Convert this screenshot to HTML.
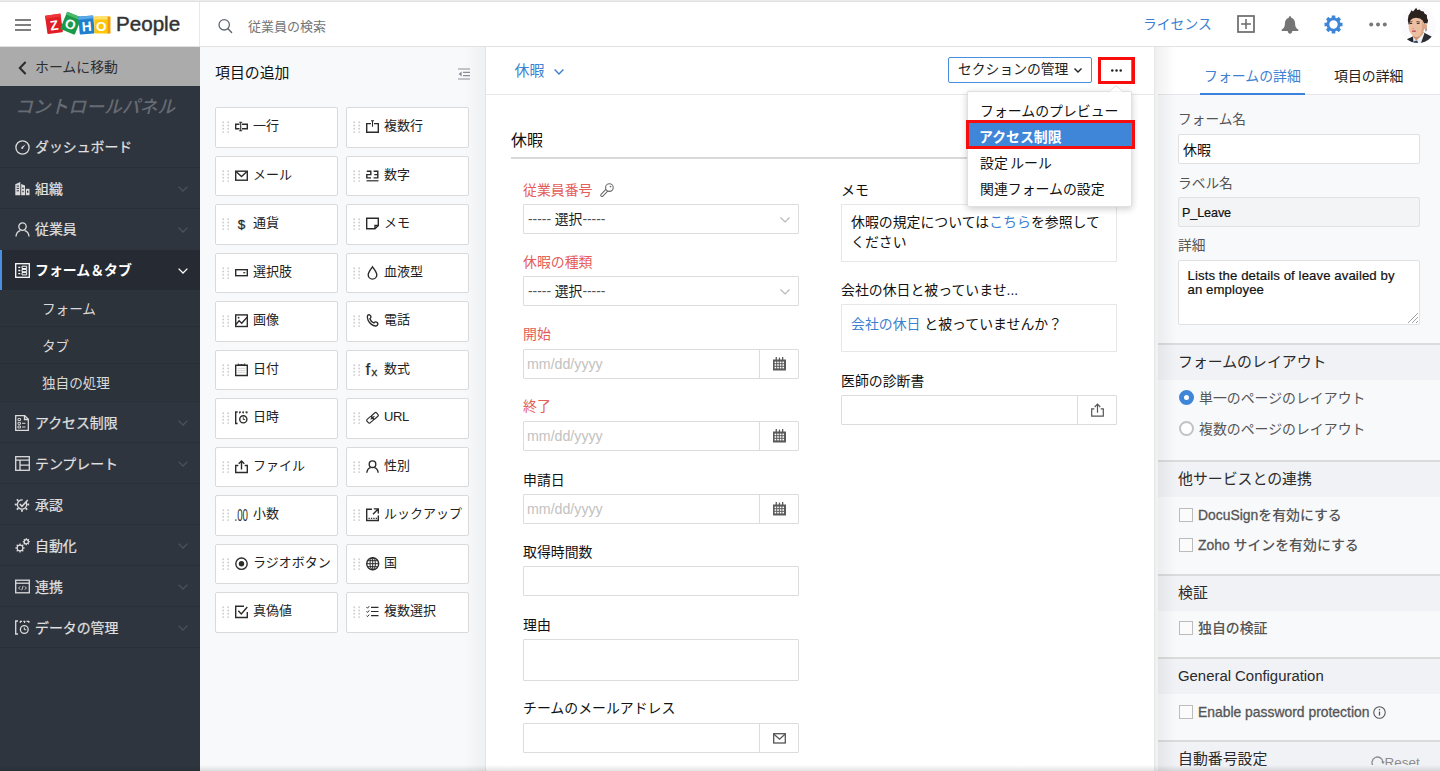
<!DOCTYPE html>
<html lang="ja">
<head>
<meta charset="utf-8">
<title>Zoho People</title>
<style>
*{box-sizing:border-box;margin:0;padding:0}
html,body{width:1440px;height:771px;overflow:hidden;background:#fff}
body{font-family:"Liberation Sans","Noto Sans CJK JP",sans-serif;font-size:13px;color:#222;position:relative}
svg{display:block;overflow:visible}
.a{position:absolute}
#topline{position:absolute;left:0;top:0;width:1440px;height:2px;background:linear-gradient(#f1f1f1,#dcdcdc)}
#hdr{position:absolute;left:0;top:2px;width:1440px;height:45px;background:#fff;border-bottom:1px solid #e2e2e2}
#hdr .vsep{position:absolute;left:199px;top:0;width:1px;height:44px;background:#e8e8e8}
#people{position:absolute;left:116px;top:8px;font-size:20.6px;color:#333;line-height:28px;-webkit-text-stroke:0.45px #333}
#search{position:absolute;left:248px;top:15px;font-size:13px;color:#757575;line-height:20px}
#lic{position:absolute;left:1143px;top:12px;font-size:13.8px;color:#3d7fd0;line-height:22px}
/* sidebar */
#side{position:absolute;left:0;top:47px;width:200px;height:724px;background:#2f353e}
#back{position:absolute;left:0;top:0;width:200px;height:39px;background:#ababab;color:#2e2e2e;font-size:13.9px;line-height:39px}
#cp{position:absolute;left:15px;top:47px;font-size:17.8px;font-style:italic;font-weight:500;color:#666b73;line-height:26px;white-space:nowrap}
.mi{position:absolute;left:0;width:200px;border-bottom:1px solid #2a2f37;color:#e0e0e0;font-size:13.9px;font-weight:400;-webkit-text-stroke:0.22px #e0e0e0;white-space:nowrap}
.mi.act{background:#262b33;border-left:2px solid #4a90e2;font-weight:700;color:#fff;border-bottom:0;-webkit-text-stroke:0}
.mi .ic{position:absolute;left:15px}
.mi.act .ic{left:13px}
.mi .tx{position:absolute;left:35px;line-height:20px}
.mi.act .tx{left:33px}
.mi svg.ch{position:absolute;left:178px}
.mi.act svg.ch{left:176px}
.sub{position:absolute;left:0;width:200px;background:#2d333b;border-bottom:1px solid #2a2f37;color:#d9d9d9;font-size:13.6px}
.sub .tx{position:absolute;left:42px;line-height:20px}
/* palette */
#pal{position:absolute;left:200px;top:47px;width:285px;height:724px;background:linear-gradient(90deg,#f8f9fb 0,#f8f9fb 264px,#eff0f2 285px)}
#pal h3{position:absolute;left:15px;top:15px;font-size:14.9px;font-weight:400;color:#111;line-height:22px}
.fc{position:absolute;width:123px;height:40px;background:#fff;border:1px solid #dadada;border-radius:2px;font-size:13px;color:#222;white-space:nowrap}
.fc .t{position:absolute;left:37px;top:0;line-height:36px}
.fc svg.g{position:absolute;left:6px;top:13px}
.fc svg.i{position:absolute;left:19px;top:12px}
/* center */
#ctr{position:absolute;left:485px;top:47px;width:669px;height:724px;background:#fff;border-left:1px solid #e4e4e4}
#ctrbar{position:absolute;left:0;top:0;width:668px;height:48px;border-bottom:1px solid #e6e6e6}
#fname{position:absolute;left:28.5px;top:12.5px;font-size:14.9px;color:#3d7fd0;line-height:22px}
#secbtn{position:absolute;left:462px;top:10px;width:144px;height:26px;border:1px solid #4a8fdf;border-radius:2px;font-size:13.8px;line-height:24px;color:#222;padding-left:9px;white-space:nowrap;background:#fff}
#dots{position:absolute;left:612px;top:10px;width:37px;height:27px;border:3px solid #f80d0d;background:#fff}
#dots .bl{position:absolute;right:0;top:0;bottom:0;width:1px;background:#4a8fdf}
#sech{position:absolute;left:25px;top:82px;font-size:16px;color:#111;line-height:24px}
#secl{position:absolute;left:25px;top:110px;width:620px;height:2px;background:#d8d8d8}
.lb{position:absolute;font-size:13.9px;line-height:20px;color:#111;white-space:nowrap}
.lb.r{color:#e45d58}
.ds{color:#555}
.inp{position:absolute;width:276px;height:30px;background:#fff;border:1px solid #dcdcdc;border-radius:1px;font-size:13px;line-height:28px;color:#222}
.inp .ph{position:absolute;left:3px;top:0;color:#c2c2c2;font-size:14.2px;line-height:28px}
.inp .sel{position:absolute;left:4px;top:1px;color:#222;font-size:13.8px;line-height:27px;white-space:nowrap}
.inp .ad{position:absolute;right:0;top:0;width:39px;height:28px;border-left:1px solid #dcdcdc}
.box{position:absolute;width:276px;background:#fff;border:1px solid #e7e7e7;font-size:13.9px;line-height:20px;color:#111;padding:7px 9px}
.lnk{color:#3d7fd0}
/* dropdown */
#dd{position:absolute;left:967px;top:91px;width:165px;height:116px;background:#fff;border:1px solid #e0e0e0;border-radius:2px;box-shadow:0 2px 7px rgba(0,0,0,.2)}
#dd .it{position:absolute;left:0;width:163px;height:26px;font-size:13.9px;line-height:26px;padding-left:12px;color:#111;white-space:nowrap}
#dd .hl{background:#3f86d8;color:#fff;font-weight:700;border:3px solid #f80d0d;line-height:29px;padding-left:10px;left:-2px;width:169px;height:29px}
/* right */
#rshadow{position:absolute;left:1154px;top:47px;width:4px;height:724px;background:linear-gradient(90deg,#e6e6e6 0,#e6e6e6 1px,#efefef 1px,#f2f2f2 4px)}
#rgt{position:absolute;left:1158px;top:47px;width:282px;height:724px;background:#f8f9fb}
#rgt .inshadow{position:absolute;left:0;top:0;width:18px;height:724px;background:linear-gradient(90deg,rgba(0,0,0,.05),rgba(0,0,0,0))}
#tabs{position:absolute;left:0;top:0;width:282px;height:48px;background:#fff;border-bottom:1px solid #e4e6e9}
.tab{position:absolute;top:18px;font-size:13.9px;line-height:22px;white-space:nowrap;color:#222}
.rl{position:absolute;left:20px;font-size:13.7px;line-height:20px;color:#555;white-space:nowrap}
.ri{position:absolute;left:20px;width:242px;background:#fff;border:1px solid #e1e1e1;border-radius:2px;font-size:13px;color:#111;padding-left:4px;white-space:nowrap}
.sh{position:absolute;left:0;width:282px;height:37px;background:#f1f2f6;border-top:2px solid #dbdbdc;font-size:14.9px;line-height:34px;color:#2a2a2a;padding-left:20px;white-space:nowrap}
.opt{position:absolute;left:40px;font-size:13.9px;line-height:20px;color:#555;white-space:nowrap}
.cb{position:absolute;left:21px;width:14px;height:14px;border:1.5px solid #bcbcbc;background:#fbfbfb}
.rd{position:absolute;left:21px;width:15px;height:15px;border:2px solid #c2c2c2;border-radius:50%;background:#fff}
.rd.on{border:5.5px solid #3f86d8}
.lt{-webkit-text-stroke:0.3px #555}
#botfade{position:absolute;left:0;top:765px;width:1440px;height:6px;background:linear-gradient(rgba(0,0,0,0),rgba(0,0,0,.11))}
</style>
</head>
<body>
<div id="topline"></div>
<div id="hdr">
<div class="vsep"></div>
<svg class="a" style="left:15px;top:17px" width="16" height="12" viewBox="0 0 16 12"><path d="M0 1h16M0 6h16M0 11h16" stroke="#555" stroke-width="1.5" fill="none"/></svg>
<div id="people">People</div>
<svg class="a" style="left:218px;top:16px" width="15" height="16" viewBox="0 0 15 16"><circle cx="6.2" cy="6.8" r="5.2" stroke="#5f6770" stroke-width="1.3" fill="none"/><path d="M10 10.8l3.6 3.8" stroke="#5f6770" stroke-width="1.4" stroke-linecap="round"/></svg>
<div id="search">従業員の検索</div>
<div id="lic">ライセンス</div>
<svg class="a" style="left:1237px;top:13px" width="18" height="18" viewBox="0 0 18 18"><rect x="1" y="1" width="16" height="16" fill="none" stroke="#6a6a6a" stroke-width="1.7"/><path d="M9 4.1v9.8M4.1 9h9.8" stroke="#6a6a6a" stroke-width="1.5"/></svg>
<svg class="a" style="left:1281px;top:13.5px" width="18" height="18" viewBox="0 0 18 18"><path d="M9 0.3c.700 0 1.2.500 1.2 1.1v.400c2.4.700 3.9 2.8 3.9 5.6 0 2.8.700 4.3 2.1 5.4.800.6 1.3.800 1.3 1.4 0 .500-.400.8-1 .800H1.5c-.600 0-1-.300-1-.800 0-.600.5-.800 1.3-1.4C3.2 11.7 3.9 10.2 3.9 7.4c0-2.8 1.5-4.9 3.9-5.6v-.400C7.8.800 8.3.300 9 .300z" fill="#757575"/><path d="M6.7 14.8h4.6c0 1.7-.900 2.9-2.3 2.9s-2.3-1.2-2.3-2.9z" fill="#757575"/></svg>
<svg class="a" style="left:1324px;top:13px" width="19" height="19" viewBox="0 0 19 19"><rect x="7.7" y="0.5" width="3.6" height="3.6" rx="0.3" transform="rotate(0 9.5 9.5)" fill="#3d85d8"/><rect x="7.7" y="0.5" width="3.6" height="3.6" rx="0.3" transform="rotate(45 9.5 9.5)" fill="#3d85d8"/><rect x="7.7" y="0.5" width="3.6" height="3.6" rx="0.3" transform="rotate(90 9.5 9.5)" fill="#3d85d8"/><rect x="7.7" y="0.5" width="3.6" height="3.6" rx="0.3" transform="rotate(135 9.5 9.5)" fill="#3d85d8"/><rect x="7.7" y="0.5" width="3.6" height="3.6" rx="0.3" transform="rotate(180 9.5 9.5)" fill="#3d85d8"/><rect x="7.7" y="0.5" width="3.6" height="3.6" rx="0.3" transform="rotate(225 9.5 9.5)" fill="#3d85d8"/><rect x="7.7" y="0.5" width="3.6" height="3.6" rx="0.3" transform="rotate(270 9.5 9.5)" fill="#3d85d8"/><rect x="7.7" y="0.5" width="3.6" height="3.6" rx="0.3" transform="rotate(315 9.5 9.5)" fill="#3d85d8"/><circle cx="9.5" cy="9.5" r="5.6" fill="none" stroke="#3d85d8" stroke-width="2.8"/></svg>
<svg class="a" style="left:1369px;top:20px" width="18" height="5" viewBox="0 0 18 5"><circle cx="2.2" cy="2.5" r="2" fill="#777"/><circle cx="9" cy="2.5" r="2" fill="#777"/><circle cx="15.8" cy="2.5" r="2" fill="#777"/></svg>
<svg class="a" style="left:1400px;top:5px" width="36" height="36" viewBox="0 0 36 36"><defs><clipPath id="avc"><circle cx="18" cy="18" r="18"/></clipPath></defs>
<g clip-path="url(#avc)"><rect width="36" height="36" fill="#fbfafd"/>
<path d="M23.4 25.3L31.9 29.7 27.5 36H20.3z" fill="#2a2d35"/><path d="M6.3 32.4L13.3 29.3 14.2 36H9z" fill="#23262d"/>
<path d="M13 29.3L16.2 33.6 23.2 25.6 24.4 26.4 21 36H13.6z" fill="#edf1f4"/><path d="M14.3 33.9L17.3 33.5 18.1 36H13.9z" fill="#2b4166"/>
<path d="M12.8 26.5L22.6 23.5 23 27 16.2 33.7 12.9 29.4z" fill="#cf926f"/>
<ellipse cx="16.4" cy="19.7" rx="7.9" ry="10.3" fill="#ecbfa2" transform="rotate(-5 16.4 19.7)"/>
<path d="M22.5 13.5c1.5 2.5 2 6 1.3 9.5-.700 3.3-2.7 6-5.3 7 2-2.3 3-5 3.3-8 .300-3 .100-5.8.700-8.5z" fill="#c98f6d" opacity=".55"/>
<path d="M8.6 17.5L7.8 13 8.5 8.6 10.4 5.6 11.4 3.2 13 4.4 16.2 0.7 17.3 3 19.6 2.4 21 4.1 23.6 4.5 24.5 6.6 26.9 8 27 11.1 28.1 13.6 27.3 16.6 25.2 16.2 24.3 16.8 22.6 13.5 20 11.5 16 10.8 12.5 11.6 10.3 13.6 9.3 17.4z" fill="#2b221e"/>
<ellipse cx="25.3" cy="19.4" rx="1.7" ry="2.9" fill="#dda584"/><path d="M26.2 21.8l.5-.3-.7 3.2-.6-1.8z" fill="#2b221e"/>
<path d="M9.3 15.2l3-.6M16.4 14.7l3.4.300" stroke="#3a2a22" stroke-width="0.8"/><path d="M9.8 16.5h2.4M16.8 16.4h2.7" stroke="#3d2c26" stroke-width="1"/>
<path d="M12.3 21.3l1.5.300" stroke="#c08a68" stroke-width="0.8"/><ellipse cx="14" cy="24.2" rx="2.2" ry="0.9" fill="#c85a6a"/>
</g></svg>
</div>
<svg class="a" style="left:44px;top:8px" width="70" height="30" viewBox="0 0 70 30">
<g transform="rotate(-8 10 16)"><rect x="2.2" y="6.6" width="15.6" height="18.6" rx="1" fill="#e01e26"/><rect x="2.2" y="6.6" width="15.6" height="3" fill="#f0353a"/><text x="10" y="22" font-family="Liberation Sans, sans-serif" font-weight="700" font-size="13.5" fill="#fff" text-anchor="middle">Z</text></g>
<g transform="rotate(22 27 15)"><rect x="19.2" y="6" width="15.6" height="18.6" rx="1" fill="#199a49"/><rect x="19.2" y="6" width="15.6" height="3" fill="#4cba6c"/><text x="27" y="21.2" font-family="Liberation Sans, sans-serif" font-weight="700" font-size="13.5" fill="#fff" text-anchor="middle">O</text></g>
<g transform="rotate(-5 42.5 17)"><rect x="35" y="8" width="15" height="18" rx="1" fill="#1f7fcf"/><rect x="35" y="8" width="15" height="3" fill="#5aa9e6"/><text x="42.5" y="23" font-family="Liberation Sans, sans-serif" font-weight="700" font-size="13.5" fill="#fff" text-anchor="middle">H</text></g>
<g><rect x="50.3" y="8.6" width="16" height="17" rx="1" fill="#fdc60a"/><rect x="50.3" y="8.6" width="16" height="3" fill="#fee066"/><rect x="63.6" y="8.6" width="2.7" height="17" fill="#f29a12"/><text x="57.3" y="23.2" font-family="Liberation Sans, sans-serif" font-weight="700" font-size="13.5" fill="#fff" text-anchor="middle">O</text></g>
</svg>
<div id="side">
<div id="back"><svg class="a" style="left:18px;top:14px" width="9" height="14" viewBox="0 0 9 14"><path d="M7.6 1L1.8 7l5.8 6" stroke="#2a2a2a" stroke-width="2" fill="none"/></svg><span class="a" style="left:35px;top:1px">ホームに移動</span></div>
<div id="cp">コントロールパネル</div>
<div class="mi" style="top:79px;height:42px"><span class="ic" style="top:13.5px"><svg width="15" height="15" viewBox="0 0 15 15"><circle cx="7.5" cy="7.5" r="6.6" stroke="#dcdcdc" fill="none" stroke-width="1.3"/><path d="M10.6 4.3L7.9 8.3 6.7 7.1z" fill="#dcdcdc"/><circle cx="7.2" cy="8" r="1" fill="#dcdcdc"/></svg></span><span class="tx" style="top:11px">ダッシュボード</span></div>
<div class="mi" style="top:121px;height:41px"><span class="ic" style="top:13.2px"><svg width="15" height="15" viewBox="0 0 15 15"><path d="M0.3 14.2V3.2L5.3 1v13.2z" fill="#dcdcdc"/><path d="M6.2 3l3.8 1.6v9.6H6.2z" fill="#dcdcdc"/><path d="M10.8 7.8h3.7v6.4h-3.7z" fill="#dcdcdc"/><path d="M1.6 5h2.4M1.6 7.4h2.4M1.6 9.8h2.4" stroke="#2f353e" stroke-width="1"/><path d="M7.4 6.5h1.3v1.5H7.4zM7.4 9.8h1.3v1.5H7.4zM12 9.8h1.3v2H12z" fill="#2f353e"/></svg></span><span class="tx" style="top:10.7px">組織</span><svg style="top:18.2px" class="ch" width="10" height="6" viewBox="0 0 10 6"><path d="M0.6 0.6L5 5l4.4-4.4" stroke="#4b525b" stroke-width="1.3" fill="none"/></svg></div>
<div class="mi" style="top:162px;height:41px;border-bottom:0"><span class="ic" style="top:12.9px"><svg width="15" height="15" viewBox="0 0 15 15"><circle cx="7.5" cy="4.6" r="3.7" stroke="#dcdcdc" fill="none" stroke-width="1.3"/><path d="M1 14.5c.3-3.6 2.8-5.5 4.3-5.9M14 14.5c-.3-3.6-2.8-5.5-4.3-5.9" stroke="#dcdcdc" fill="none" stroke-width="1.3"/></svg></span><span class="tx" style="top:10.4px">従業員</span><svg style="top:17.9px" class="ch" width="10" height="6" viewBox="0 0 10 6"><path d="M0.6 0.6L5 5l4.4-4.4" stroke="#4b525b" stroke-width="1.3" fill="none"/></svg></div>
<div class="mi act" style="top:203px;height:40px"><span class="ic" style="top:12.5px"><svg width="15" height="15" viewBox="0 0 15 15"><rect x="0.7" y="0.7" width="13.6" height="13.6" stroke="#fff" fill="none" stroke-width="1.3"/><path d="M3.3 4.3h2M3.3 7.5h2M3.3 10.7h2" stroke="#fff" stroke-width="1.3"/><path d="M7 3.2h4.7v2.3H7zM7 6.4h4.7v2.3H7zM7 9.6h4.7v2.3H7z" stroke="#fff" stroke-width="1" fill="none"/></svg></span><span class="tx" style="top:10px">フォーム＆タブ</span><svg style="top:17.5px" class="ch" width="10" height="6" viewBox="0 0 10 6"><path d="M0.6 0.6L5 5l4.4-4.4" stroke="#fff" stroke-width="1.3" fill="none"/></svg></div>
<div class="mi" style="top:355px;height:41px"><span class="ic" style="top:13px"><svg width="15" height="16" viewBox="0 0 15 16"><path d="M0.7 0.7h9l3.6 3.6v11h-12.6z" stroke="#dcdcdc" fill="none" stroke-width="1.3"/><path d="M9.5 0.7v3.8h3.8" stroke="#dcdcdc" fill="none" stroke-width="1.3"/><path d="M3 3.5h2.5v2H3zM3 7.3h2.5v2H3zM3 11h2.5v2H3z" stroke="#dcdcdc" stroke-width="0.9" fill="none"/><path d="M7 8.3h3.5M7 12h3.5" stroke="#dcdcdc" stroke-width="1"/></svg></span><span class="tx" style="top:10.5px">アクセス制限</span><svg style="top:18px" class="ch" width="10" height="6" viewBox="0 0 10 6"><path d="M0.6 0.6L5 5l4.4-4.4" stroke="#4b525b" stroke-width="1.3" fill="none"/></svg></div>
<div class="mi" style="top:396px;height:41px"><span class="ic" style="top:13px"><svg width="15" height="15" viewBox="0 0 15 15"><rect x="0.7" y="0.7" width="13.6" height="13.6" stroke="#dcdcdc" fill="none" stroke-width="1.3"/><path d="M0.7 4.2h13.6M5 4.2v10.1M5 9.2h9.3" stroke="#dcdcdc" fill="none" stroke-width="1.3"/></svg></span><span class="tx" style="top:10.5px">テンプレート</span><svg style="top:18px" class="ch" width="10" height="6" viewBox="0 0 10 6"><path d="M0.6 0.6L5 5l4.4-4.4" stroke="#4b525b" stroke-width="1.3" fill="none"/></svg></div>
<div class="mi" style="top:437px;height:41px"><span class="ic" style="top:13px"><svg width="15" height="15" viewBox="0 0 15 15"><path d="M7 0.3v2" stroke="#dcdcdc" stroke-width="1.8" transform="rotate(90 7 7.5)"/><path d="M7 0.3v2" stroke="#dcdcdc" stroke-width="1.8" transform="rotate(135 7 7.5)"/><path d="M7 0.3v2" stroke="#dcdcdc" stroke-width="1.8" transform="rotate(180 7 7.5)"/><path d="M7 0.3v2" stroke="#dcdcdc" stroke-width="1.8" transform="rotate(225 7 7.5)"/><path d="M7 0.3v2" stroke="#dcdcdc" stroke-width="1.8" transform="rotate(270 7 7.5)"/><path d="M7 0.3v2" stroke="#dcdcdc" stroke-width="1.8" transform="rotate(315 7 7.5)"/><path d="M10.9 5.1A4.6 4.6 0 1 1 7.7 3" stroke="#dcdcdc" fill="none" stroke-width="1.3"/><path d="M4.8 7l2.2 2.3 5.8-6.3" stroke="#dcdcdc" stroke-width="1.5" fill="none"/></svg></span><span class="tx" style="top:10.5px">承認</span></div>
<div class="mi" style="top:478px;height:41px"><span class="ic" style="top:13px"><svg width="15" height="15" viewBox="0 0 15 15"><path d="M5 5.4v1.9" stroke="#dcdcdc" stroke-width="1.3" transform="rotate(0 5 10)"/><path d="M5 5.4v1.9" stroke="#dcdcdc" stroke-width="1.3" transform="rotate(45 5 10)"/><path d="M5 5.4v1.9" stroke="#dcdcdc" stroke-width="1.3" transform="rotate(90 5 10)"/><path d="M5 5.4v1.9" stroke="#dcdcdc" stroke-width="1.3" transform="rotate(135 5 10)"/><path d="M5 5.4v1.9" stroke="#dcdcdc" stroke-width="1.3" transform="rotate(180 5 10)"/><path d="M5 5.4v1.9" stroke="#dcdcdc" stroke-width="1.3" transform="rotate(225 5 10)"/><path d="M5 5.4v1.9" stroke="#dcdcdc" stroke-width="1.3" transform="rotate(270 5 10)"/><path d="M5 5.4v1.9" stroke="#dcdcdc" stroke-width="1.3" transform="rotate(315 5 10)"/><circle cx="5" cy="10" r="2.9" stroke="#dcdcdc" stroke-width="1.2" fill="none"/><path d="M11.3 0.2v1.6" stroke="#dcdcdc" stroke-width="1.3" transform="rotate(0 11.3 3.7)"/><path d="M11.3 0.2v1.6" stroke="#dcdcdc" stroke-width="1.3" transform="rotate(45 11.3 3.7)"/><path d="M11.3 0.2v1.6" stroke="#dcdcdc" stroke-width="1.3" transform="rotate(90 11.3 3.7)"/><path d="M11.3 0.2v1.6" stroke="#dcdcdc" stroke-width="1.3" transform="rotate(135 11.3 3.7)"/><path d="M11.3 0.2v1.6" stroke="#dcdcdc" stroke-width="1.3" transform="rotate(180 11.3 3.7)"/><path d="M11.3 0.2v1.6" stroke="#dcdcdc" stroke-width="1.3" transform="rotate(225 11.3 3.7)"/><path d="M11.3 0.2v1.6" stroke="#dcdcdc" stroke-width="1.3" transform="rotate(270 11.3 3.7)"/><path d="M11.3 0.2v1.6" stroke="#dcdcdc" stroke-width="1.3" transform="rotate(315 11.3 3.7)"/><circle cx="11.3" cy="3.7" r="2.1" stroke="#dcdcdc" stroke-width="1.2" fill="none"/></svg></span><span class="tx" style="top:10.5px">自動化</span><svg style="top:18px" class="ch" width="10" height="6" viewBox="0 0 10 6"><path d="M0.6 0.6L5 5l4.4-4.4" stroke="#4b525b" stroke-width="1.3" fill="none"/></svg></div>
<div class="mi" style="top:519px;height:41px"><span class="ic" style="top:13px"><svg width="15" height="15" viewBox="0 0 15 15"><rect x="0.7" y="1.2" width="13.6" height="12.6" stroke="#dcdcdc" fill="none" stroke-width="1.3"/><path d="M0.7 4.2h13.6" stroke="#dcdcdc" fill="none" stroke-width="1.3"/><path d="M5.2 7.3L3.6 9l1.6 1.7M9.8 7.3L11.4 9l-1.6 1.7M8.2 6.8l-1.4 4.4" stroke="#dcdcdc" stroke-width="0.9" fill="none"/></svg></span><span class="tx" style="top:10.5px">連携</span><svg style="top:18px" class="ch" width="10" height="6" viewBox="0 0 10 6"><path d="M0.6 0.6L5 5l4.4-4.4" stroke="#4b525b" stroke-width="1.3" fill="none"/></svg></div>
<div class="mi" style="top:560px;height:41px"><span class="ic" style="top:13px"><svg width="15" height="15" viewBox="0 0 15 15"><path d="M3 1H0.7v13H3" stroke="#dcdcdc" fill="none" stroke-width="1.3"/><path d="M5 1.3h2M8.3 1.3h2M11.6 1.3h2.6" stroke="#dcdcdc" stroke-width="1.3"/><path d="M5.3 1v2M9.6 1v2M13.8 1v2" stroke="#dcdcdc" stroke-width="1.1"/><circle cx="9.3" cy="9.5" r="3.9" stroke="#dcdcdc" fill="none" stroke-width="1.3"/><path d="M9.3 7.3v2.4h2" stroke="#dcdcdc" stroke-width="1" fill="none"/></svg></span><span class="tx" style="top:10.5px">データの管理</span><svg style="top:18px" class="ch" width="10" height="6" viewBox="0 0 10 6"><path d="M0.6 0.6L5 5l4.4-4.4" stroke="#4b525b" stroke-width="1.3" fill="none"/></svg></div>
<div class="sub" style="top:243px;height:37px"><span class="tx" style="top:10.4px">フォーム</span></div>
<div class="sub" style="top:280px;height:37px"><span class="tx" style="top:10px">タブ</span></div>
<div class="sub" style="top:317px;height:38px"><span class="tx" style="top:10.3px">独自の処理</span></div>
</div>
<div id="pal">
<h3>項目の追加</h3>
<svg class="a" style="left:258px;top:21px" width="12" height="12" viewBox="0 0 12 12"><path d="M0 1h12M5 4.3h7M5 7.7h7M0 11h12" stroke="#8a8f96" stroke-width="1.2"/><path d="M3.6 3.5v5L0.6 6z" fill="#8a8f96"/></svg>
<div class="fc" style="left:15px;top:60px;height:41px"><svg class="g" width="8" height="13" viewBox="0 0 8 13"><circle cx="1.2" cy="1.2" r="0.95" fill="#cfcfcf"/><circle cx="1.2" cy="4.5" r="0.95" fill="#cfcfcf"/><circle cx="1.2" cy="7.8" r="0.95" fill="#cfcfcf"/><circle cx="1.2" cy="11.1" r="0.95" fill="#cfcfcf"/><circle cx="6.2" cy="1.2" r="0.95" fill="#cfcfcf"/><circle cx="6.2" cy="4.5" r="0.95" fill="#cfcfcf"/><circle cx="6.2" cy="7.8" r="0.95" fill="#cfcfcf"/><circle cx="6.2" cy="11.1" r="0.95" fill="#cfcfcf"/></svg><svg class="i" width="13" height="13" viewBox="0 0 13 13"><path d="M4.5 4.3H0.7v4.4h3.8M7 4.3h5.3v4.4H7" stroke="#2b2b2b" fill="none" stroke-width="1.4"/><path d="M5.7 2.2v8.6M4.2 2.2h3M4.2 10.8h3" stroke="#2b2b2b" stroke-width="1.1" fill="none"/></svg><span class="t">一行</span></div><div class="fc" style="left:146px;top:60px;height:41px"><svg class="g" width="8" height="13" viewBox="0 0 8 13"><circle cx="1.2" cy="1.2" r="0.95" fill="#cfcfcf"/><circle cx="1.2" cy="4.5" r="0.95" fill="#cfcfcf"/><circle cx="1.2" cy="7.8" r="0.95" fill="#cfcfcf"/><circle cx="1.2" cy="11.1" r="0.95" fill="#cfcfcf"/><circle cx="6.2" cy="1.2" r="0.95" fill="#cfcfcf"/><circle cx="6.2" cy="4.5" r="0.95" fill="#cfcfcf"/><circle cx="6.2" cy="7.8" r="0.95" fill="#cfcfcf"/><circle cx="6.2" cy="11.1" r="0.95" fill="#cfcfcf"/></svg><svg class="i" width="13" height="13" viewBox="0 0 13 13"><path d="M5 3.6H0.7v8.7h11.6V3.6H8" stroke="#2b2b2b" fill="none" stroke-width="1.4"/><path d="M6.5 0.8v6M5 0.8h3" stroke="#2b2b2b" stroke-width="1.1" fill="none"/></svg><span class="t">複数行</span></div>
<div class="fc" style="left:15px;top:109px"><svg class="g" width="8" height="13" viewBox="0 0 8 13"><circle cx="1.2" cy="1.2" r="0.95" fill="#cfcfcf"/><circle cx="1.2" cy="4.5" r="0.95" fill="#cfcfcf"/><circle cx="1.2" cy="7.8" r="0.95" fill="#cfcfcf"/><circle cx="1.2" cy="11.1" r="0.95" fill="#cfcfcf"/><circle cx="6.2" cy="1.2" r="0.95" fill="#cfcfcf"/><circle cx="6.2" cy="4.5" r="0.95" fill="#cfcfcf"/><circle cx="6.2" cy="7.8" r="0.95" fill="#cfcfcf"/><circle cx="6.2" cy="11.1" r="0.95" fill="#cfcfcf"/></svg><svg class="i" width="13" height="13" viewBox="0 0 13 13"><rect x="0.7" y="2.2" width="11.6" height="9" stroke="#2b2b2b" fill="none" stroke-width="1.4"/><path d="M1 2.6l5.5 5 5.5-5" stroke="#2b2b2b" fill="none" stroke-width="1.4"/></svg><span class="t">メール</span></div><div class="fc" style="left:146px;top:109px"><svg class="g" width="8" height="13" viewBox="0 0 8 13"><circle cx="1.2" cy="1.2" r="0.95" fill="#cfcfcf"/><circle cx="1.2" cy="4.5" r="0.95" fill="#cfcfcf"/><circle cx="1.2" cy="7.8" r="0.95" fill="#cfcfcf"/><circle cx="1.2" cy="11.1" r="0.95" fill="#cfcfcf"/><circle cx="6.2" cy="1.2" r="0.95" fill="#cfcfcf"/><circle cx="6.2" cy="4.5" r="0.95" fill="#cfcfcf"/><circle cx="6.2" cy="7.8" r="0.95" fill="#cfcfcf"/><circle cx="6.2" cy="11.1" r="0.95" fill="#cfcfcf"/></svg><svg class="i" width="13" height="13" viewBox="0 0 13 13"><path d="M0.8 2.3h4v3.3h-4v3.3h4.2M7.6 2.3h4.2v6.6H7.6M8.3 5.6h3.5" stroke="#2b2b2b" fill="none" stroke-width="1.4"/><path d="M0.5 11.8h12" stroke="#2b2b2b" stroke-width="1.2"/></svg><span class="t">数字</span></div>
<div class="fc" style="left:15px;top:157px;height:41px"><svg class="g" width="8" height="13" viewBox="0 0 8 13"><circle cx="1.2" cy="1.2" r="0.95" fill="#cfcfcf"/><circle cx="1.2" cy="4.5" r="0.95" fill="#cfcfcf"/><circle cx="1.2" cy="7.8" r="0.95" fill="#cfcfcf"/><circle cx="1.2" cy="11.1" r="0.95" fill="#cfcfcf"/><circle cx="6.2" cy="1.2" r="0.95" fill="#cfcfcf"/><circle cx="6.2" cy="4.5" r="0.95" fill="#cfcfcf"/><circle cx="6.2" cy="7.8" r="0.95" fill="#cfcfcf"/><circle cx="6.2" cy="11.1" r="0.95" fill="#cfcfcf"/></svg><svg class="i" width="13" height="13" viewBox="0 0 13 13"><text x="6.5" y="12" font-family="Liberation Sans, sans-serif" font-size="13.5" fill="#2b2b2b" stroke="#2b2b2b" stroke-width="0.3" text-anchor="middle">$</text></svg><span class="t">通貨</span></div><div class="fc" style="left:146px;top:157px;height:41px"><svg class="g" width="8" height="13" viewBox="0 0 8 13"><circle cx="1.2" cy="1.2" r="0.95" fill="#cfcfcf"/><circle cx="1.2" cy="4.5" r="0.95" fill="#cfcfcf"/><circle cx="1.2" cy="7.8" r="0.95" fill="#cfcfcf"/><circle cx="1.2" cy="11.1" r="0.95" fill="#cfcfcf"/><circle cx="6.2" cy="1.2" r="0.95" fill="#cfcfcf"/><circle cx="6.2" cy="4.5" r="0.95" fill="#cfcfcf"/><circle cx="6.2" cy="7.8" r="0.95" fill="#cfcfcf"/><circle cx="6.2" cy="11.1" r="0.95" fill="#cfcfcf"/></svg><svg class="i" width="13" height="13" viewBox="0 0 13 13"><path d="M0.7 1.2h11.6v7.3l-3.3 3.3H0.7z" stroke="#2b2b2b" fill="none" stroke-width="1.4"/><path d="M12.3 8.5H9v3.3" stroke="#2b2b2b" fill="none" stroke-width="1.4"/></svg><span class="t">メモ</span></div>
<div class="fc" style="left:15px;top:206px"><svg class="g" width="8" height="13" viewBox="0 0 8 13"><circle cx="1.2" cy="1.2" r="0.95" fill="#cfcfcf"/><circle cx="1.2" cy="4.5" r="0.95" fill="#cfcfcf"/><circle cx="1.2" cy="7.8" r="0.95" fill="#cfcfcf"/><circle cx="1.2" cy="11.1" r="0.95" fill="#cfcfcf"/><circle cx="6.2" cy="1.2" r="0.95" fill="#cfcfcf"/><circle cx="6.2" cy="4.5" r="0.95" fill="#cfcfcf"/><circle cx="6.2" cy="7.8" r="0.95" fill="#cfcfcf"/><circle cx="6.2" cy="11.1" r="0.95" fill="#cfcfcf"/></svg><svg class="i" width="13" height="13" viewBox="0 0 13 13"><rect x="0.7" y="3.7" width="11.6" height="6" stroke="#2b2b2b" fill="none" stroke-width="1.4"/><path d="M8.3 6.7h2" stroke="#2b2b2b" stroke-width="1.2"/></svg><span class="t">選択肢</span></div><div class="fc" style="left:146px;top:206px"><svg class="g" width="8" height="13" viewBox="0 0 8 13"><circle cx="1.2" cy="1.2" r="0.95" fill="#cfcfcf"/><circle cx="1.2" cy="4.5" r="0.95" fill="#cfcfcf"/><circle cx="1.2" cy="7.8" r="0.95" fill="#cfcfcf"/><circle cx="1.2" cy="11.1" r="0.95" fill="#cfcfcf"/><circle cx="6.2" cy="1.2" r="0.95" fill="#cfcfcf"/><circle cx="6.2" cy="4.5" r="0.95" fill="#cfcfcf"/><circle cx="6.2" cy="7.8" r="0.95" fill="#cfcfcf"/><circle cx="6.2" cy="11.1" r="0.95" fill="#cfcfcf"/></svg><svg class="i" width="13" height="13" viewBox="0 0 13 13"><path d="M6.5 0.8c2.2 3 4.3 5.5 4.3 8a4.3 4.3 0 0 1-8.6 0c0-2.5 2.1-5 4.3-8z" stroke="#2b2b2b" fill="none" stroke-width="1.4"/></svg><span class="t">血液型</span></div>
<div class="fc" style="left:15px;top:254px;height:41px"><svg class="g" width="8" height="13" viewBox="0 0 8 13"><circle cx="1.2" cy="1.2" r="0.95" fill="#cfcfcf"/><circle cx="1.2" cy="4.5" r="0.95" fill="#cfcfcf"/><circle cx="1.2" cy="7.8" r="0.95" fill="#cfcfcf"/><circle cx="1.2" cy="11.1" r="0.95" fill="#cfcfcf"/><circle cx="6.2" cy="1.2" r="0.95" fill="#cfcfcf"/><circle cx="6.2" cy="4.5" r="0.95" fill="#cfcfcf"/><circle cx="6.2" cy="7.8" r="0.95" fill="#cfcfcf"/><circle cx="6.2" cy="11.1" r="0.95" fill="#cfcfcf"/></svg><svg class="i" width="13" height="13" viewBox="0 0 13 13"><rect x="0.7" y="0.9" width="11.6" height="11.6" stroke="#2b2b2b" fill="none" stroke-width="1.4"/><path d="M0.9 10.5l3.2-3.7 2.6 2.4 5.4-6" stroke="#2b2b2b" fill="none" stroke-width="1.4"/><circle cx="3.6" cy="3.7" r="0.9" fill="#2b2b2b"/></svg><span class="t">画像</span></div><div class="fc" style="left:146px;top:254px;height:41px"><svg class="g" width="8" height="13" viewBox="0 0 8 13"><circle cx="1.2" cy="1.2" r="0.95" fill="#cfcfcf"/><circle cx="1.2" cy="4.5" r="0.95" fill="#cfcfcf"/><circle cx="1.2" cy="7.8" r="0.95" fill="#cfcfcf"/><circle cx="1.2" cy="11.1" r="0.95" fill="#cfcfcf"/><circle cx="6.2" cy="1.2" r="0.95" fill="#cfcfcf"/><circle cx="6.2" cy="4.5" r="0.95" fill="#cfcfcf"/><circle cx="6.2" cy="7.8" r="0.95" fill="#cfcfcf"/><circle cx="6.2" cy="11.1" r="0.95" fill="#cfcfcf"/></svg><svg class="i" width="13" height="13" viewBox="0 0 13 13"><path d="M1.7 1.3c1.3-1 2.6-.4 3.1.9.4 1-.2 2-.9 2.5.5 1.7 2.2 3.5 4.1 4.2.600-.8 1.6-1.3 2.6-.8 1.3.600 1.7 2 .7 3.1-1.2 1.3-3.6.9-6.1-1.1C2.7 8 .3 4 1.7 1.3z" stroke="#2b2b2b" fill="none" stroke-width="1.4"/></svg><span class="t">電話</span></div>
<div class="fc" style="left:15px;top:303px"><svg class="g" width="8" height="13" viewBox="0 0 8 13"><circle cx="1.2" cy="1.2" r="0.95" fill="#cfcfcf"/><circle cx="1.2" cy="4.5" r="0.95" fill="#cfcfcf"/><circle cx="1.2" cy="7.8" r="0.95" fill="#cfcfcf"/><circle cx="1.2" cy="11.1" r="0.95" fill="#cfcfcf"/><circle cx="6.2" cy="1.2" r="0.95" fill="#cfcfcf"/><circle cx="6.2" cy="4.5" r="0.95" fill="#cfcfcf"/><circle cx="6.2" cy="7.8" r="0.95" fill="#cfcfcf"/><circle cx="6.2" cy="11.1" r="0.95" fill="#cfcfcf"/></svg><svg class="i" width="13" height="13" viewBox="0 0 13 13"><path d="M0.7 2.3h11.6v10.2H0.7z" stroke="#2b2b2b" fill="none" stroke-width="1.4"/><path d="M3.3 0.5v2.6M9.7 0.5v2.6M5 1v1.3M6.5 1v1.3M8 1v1.3" stroke="#2b2b2b" stroke-width="1"/><path d="M2.5 5.3h8M2.5 7.3h8M2.5 9.3h8" stroke="#c8c8c8" stroke-width="0.8"/></svg><span class="t">日付</span></div><div class="fc" style="left:146px;top:303px"><svg class="g" width="8" height="13" viewBox="0 0 8 13"><circle cx="1.2" cy="1.2" r="0.95" fill="#cfcfcf"/><circle cx="1.2" cy="4.5" r="0.95" fill="#cfcfcf"/><circle cx="1.2" cy="7.8" r="0.95" fill="#cfcfcf"/><circle cx="1.2" cy="11.1" r="0.95" fill="#cfcfcf"/><circle cx="6.2" cy="1.2" r="0.95" fill="#cfcfcf"/><circle cx="6.2" cy="4.5" r="0.95" fill="#cfcfcf"/><circle cx="6.2" cy="7.8" r="0.95" fill="#cfcfcf"/><circle cx="6.2" cy="11.1" r="0.95" fill="#cfcfcf"/></svg><svg class="i" width="13" height="13" viewBox="0 0 13 13"><text x="-0.5" y="12.3" font-family="Liberation Sans, sans-serif" font-size="17" fill="#2b2b2b" stroke="#2b2b2b" stroke-width="0.2">f</text><text x="5.4" y="13.3" font-family="Liberation Sans, sans-serif" font-size="11.5" fill="#2b2b2b" stroke="#2b2b2b" stroke-width="0.3">x</text></svg><span class="t">数式</span></div>
<div class="fc" style="left:15px;top:351px;height:41px"><svg class="g" width="8" height="13" viewBox="0 0 8 13"><circle cx="1.2" cy="1.2" r="0.95" fill="#cfcfcf"/><circle cx="1.2" cy="4.5" r="0.95" fill="#cfcfcf"/><circle cx="1.2" cy="7.8" r="0.95" fill="#cfcfcf"/><circle cx="1.2" cy="11.1" r="0.95" fill="#cfcfcf"/><circle cx="6.2" cy="1.2" r="0.95" fill="#cfcfcf"/><circle cx="6.2" cy="4.5" r="0.95" fill="#cfcfcf"/><circle cx="6.2" cy="7.8" r="0.95" fill="#cfcfcf"/><circle cx="6.2" cy="11.1" r="0.95" fill="#cfcfcf"/></svg><svg class="i" width="13" height="13" viewBox="0 0 13 13"><path d="M2.6 1H0.7v11.5h1.9" stroke="#2b2b2b" fill="none" stroke-width="1.4"/><path d="M4.3 1.2h1.7M7.3 1.2H9M10.5 1.2h2" stroke="#2b2b2b" stroke-width="1.2"/><path d="M4.6 0.8v1.7M8.2 0.8v1.7M11.8 0.8v1.7" stroke="#2b2b2b" stroke-width="1"/><circle cx="8.3" cy="8.3" r="3.6" stroke="#2b2b2b" fill="none" stroke-width="1.4"/><path d="M8.3 6.3v2.2h1.8" stroke="#2b2b2b" stroke-width="0.9" fill="none"/></svg><span class="t">日時</span></div><div class="fc" style="left:146px;top:351px;height:41px"><svg class="g" width="8" height="13" viewBox="0 0 8 13"><circle cx="1.2" cy="1.2" r="0.95" fill="#cfcfcf"/><circle cx="1.2" cy="4.5" r="0.95" fill="#cfcfcf"/><circle cx="1.2" cy="7.8" r="0.95" fill="#cfcfcf"/><circle cx="1.2" cy="11.1" r="0.95" fill="#cfcfcf"/><circle cx="6.2" cy="1.2" r="0.95" fill="#cfcfcf"/><circle cx="6.2" cy="4.5" r="0.95" fill="#cfcfcf"/><circle cx="6.2" cy="7.8" r="0.95" fill="#cfcfcf"/><circle cx="6.2" cy="11.1" r="0.95" fill="#cfcfcf"/></svg><svg class="i" width="13" height="13" viewBox="0 0 13 13"><g transform="rotate(-40 6.5 6.8)"><rect x="0.2" y="4.5" width="6.6" height="4.6" rx="1.2" stroke="#2b2b2b" fill="none" stroke-width="1.15"/><rect x="6.2" y="4.5" width="6.6" height="4.6" rx="1.2" stroke="#2b2b2b" fill="none" stroke-width="1.15"/><path d="M4 6.8h5" stroke="#2b2b2b" stroke-width="1.1"/></g></svg><span class="t"><span style="letter-spacing:-0.4px">URL</span></span></div>
<div class="fc" style="left:15px;top:400px"><svg class="g" width="8" height="13" viewBox="0 0 8 13"><circle cx="1.2" cy="1.2" r="0.95" fill="#cfcfcf"/><circle cx="1.2" cy="4.5" r="0.95" fill="#cfcfcf"/><circle cx="1.2" cy="7.8" r="0.95" fill="#cfcfcf"/><circle cx="1.2" cy="11.1" r="0.95" fill="#cfcfcf"/><circle cx="6.2" cy="1.2" r="0.95" fill="#cfcfcf"/><circle cx="6.2" cy="4.5" r="0.95" fill="#cfcfcf"/><circle cx="6.2" cy="7.8" r="0.95" fill="#cfcfcf"/><circle cx="6.2" cy="11.1" r="0.95" fill="#cfcfcf"/></svg><svg class="i" width="13" height="13" viewBox="0 0 13 13"><path d="M3.3 5.5H0.7v7h11.6v-7H9.7" stroke="#2b2b2b" fill="none" stroke-width="1.4"/><path d="M6.5 9.5V1.2M3.7 3.8L6.5 1l2.8 2.8" stroke="#2b2b2b" fill="none" stroke-width="1.4"/></svg><span class="t">ファイル</span></div><div class="fc" style="left:146px;top:400px"><svg class="g" width="8" height="13" viewBox="0 0 8 13"><circle cx="1.2" cy="1.2" r="0.95" fill="#cfcfcf"/><circle cx="1.2" cy="4.5" r="0.95" fill="#cfcfcf"/><circle cx="1.2" cy="7.8" r="0.95" fill="#cfcfcf"/><circle cx="1.2" cy="11.1" r="0.95" fill="#cfcfcf"/><circle cx="6.2" cy="1.2" r="0.95" fill="#cfcfcf"/><circle cx="6.2" cy="4.5" r="0.95" fill="#cfcfcf"/><circle cx="6.2" cy="7.8" r="0.95" fill="#cfcfcf"/><circle cx="6.2" cy="11.1" r="0.95" fill="#cfcfcf"/></svg><svg class="i" width="13" height="13" viewBox="0 0 13 13"><circle cx="6.5" cy="4.2" r="3.3" stroke="#2b2b2b" fill="none" stroke-width="1.4"/><path d="M0.8 12.8c.3-3.2 2.4-4.8 3.8-5.2M12.2 12.8c-.3-3.2-2.4-4.8-3.8-5.2" stroke="#2b2b2b" fill="none" stroke-width="1.4"/></svg><span class="t">性別</span></div>
<div class="fc" style="left:15px;top:448px;height:41px"><svg class="g" width="8" height="13" viewBox="0 0 8 13"><circle cx="1.2" cy="1.2" r="0.95" fill="#cfcfcf"/><circle cx="1.2" cy="4.5" r="0.95" fill="#cfcfcf"/><circle cx="1.2" cy="7.8" r="0.95" fill="#cfcfcf"/><circle cx="1.2" cy="11.1" r="0.95" fill="#cfcfcf"/><circle cx="6.2" cy="1.2" r="0.95" fill="#cfcfcf"/><circle cx="6.2" cy="4.5" r="0.95" fill="#cfcfcf"/><circle cx="6.2" cy="7.8" r="0.95" fill="#cfcfcf"/><circle cx="6.2" cy="11.1" r="0.95" fill="#cfcfcf"/></svg><svg class="i" width="13" height="13" viewBox="0 0 13 13"><text x="-0.5" y="12.6" font-family="Liberation Sans, sans-serif" font-size="16" fill="#2b2b2b" textLength="13.5" lengthAdjust="spacingAndGlyphs">.00</text></svg><span class="t">小数</span></div><div class="fc" style="left:146px;top:448px;height:41px"><svg class="g" width="8" height="13" viewBox="0 0 8 13"><circle cx="1.2" cy="1.2" r="0.95" fill="#cfcfcf"/><circle cx="1.2" cy="4.5" r="0.95" fill="#cfcfcf"/><circle cx="1.2" cy="7.8" r="0.95" fill="#cfcfcf"/><circle cx="1.2" cy="11.1" r="0.95" fill="#cfcfcf"/><circle cx="6.2" cy="1.2" r="0.95" fill="#cfcfcf"/><circle cx="6.2" cy="4.5" r="0.95" fill="#cfcfcf"/><circle cx="6.2" cy="7.8" r="0.95" fill="#cfcfcf"/><circle cx="6.2" cy="11.1" r="0.95" fill="#cfcfcf"/></svg><svg class="i" width="13" height="13" viewBox="0 0 13 13"><path d="M6 1.2H0.7v11.3h11.6V7.5" stroke="#2b2b2b" fill="none" stroke-width="1.4"/><path d="M7.8 0.9h4.5v4.5M12.2 1L7 6.2" stroke="#2b2b2b" fill="none" stroke-width="1.4"/><path d="M2.5 10.3h1.3M4.9 10.3h1.3M7.3 10.3h1.3M9.7 10.3h1.3" stroke="#2b2b2b" stroke-width="1.2"/></svg><span class="t">ルックアップ</span></div>
<div class="fc" style="left:15px;top:497px"><svg class="g" width="8" height="13" viewBox="0 0 8 13"><circle cx="1.2" cy="1.2" r="0.95" fill="#cfcfcf"/><circle cx="1.2" cy="4.5" r="0.95" fill="#cfcfcf"/><circle cx="1.2" cy="7.8" r="0.95" fill="#cfcfcf"/><circle cx="1.2" cy="11.1" r="0.95" fill="#cfcfcf"/><circle cx="6.2" cy="1.2" r="0.95" fill="#cfcfcf"/><circle cx="6.2" cy="4.5" r="0.95" fill="#cfcfcf"/><circle cx="6.2" cy="7.8" r="0.95" fill="#cfcfcf"/><circle cx="6.2" cy="11.1" r="0.95" fill="#cfcfcf"/></svg><svg class="i" width="13" height="13" viewBox="0 0 13 13"><circle cx="6.5" cy="6.7" r="5.7" stroke="#2b2b2b" fill="none" stroke-width="1.4"/><circle cx="6.5" cy="6.7" r="2.7" fill="#2b2b2b"/></svg><span class="t">ラジオボタン</span></div><div class="fc" style="left:146px;top:497px"><svg class="g" width="8" height="13" viewBox="0 0 8 13"><circle cx="1.2" cy="1.2" r="0.95" fill="#cfcfcf"/><circle cx="1.2" cy="4.5" r="0.95" fill="#cfcfcf"/><circle cx="1.2" cy="7.8" r="0.95" fill="#cfcfcf"/><circle cx="1.2" cy="11.1" r="0.95" fill="#cfcfcf"/><circle cx="6.2" cy="1.2" r="0.95" fill="#cfcfcf"/><circle cx="6.2" cy="4.5" r="0.95" fill="#cfcfcf"/><circle cx="6.2" cy="7.8" r="0.95" fill="#cfcfcf"/><circle cx="6.2" cy="11.1" r="0.95" fill="#cfcfcf"/></svg><svg class="i" width="13" height="13" viewBox="0 0 13 13"><circle cx="6.7" cy="6.7" r="6" stroke="#2b2b2b" fill="none" stroke-width="1.4"/><ellipse cx="6.7" cy="6.7" rx="2.7" ry="6" stroke="#2b2b2b" stroke-width="1" fill="none"/><path d="M6.7 0.7v12M0.7 6.7h12M1.6 3.7h10.2M1.6 9.7h10.2" stroke="#2b2b2b" stroke-width="1"/></svg><span class="t">国</span></div>
<div class="fc" style="left:15px;top:545px;height:41px"><svg class="g" width="8" height="13" viewBox="0 0 8 13"><circle cx="1.2" cy="1.2" r="0.95" fill="#cfcfcf"/><circle cx="1.2" cy="4.5" r="0.95" fill="#cfcfcf"/><circle cx="1.2" cy="7.8" r="0.95" fill="#cfcfcf"/><circle cx="1.2" cy="11.1" r="0.95" fill="#cfcfcf"/><circle cx="6.2" cy="1.2" r="0.95" fill="#cfcfcf"/><circle cx="6.2" cy="4.5" r="0.95" fill="#cfcfcf"/><circle cx="6.2" cy="7.8" r="0.95" fill="#cfcfcf"/><circle cx="6.2" cy="11.1" r="0.95" fill="#cfcfcf"/></svg><svg class="i" width="13" height="13" viewBox="0 0 13 13"><path d="M9 1.2H0.7v11.3h11.6V7" stroke="#2b2b2b" fill="none" stroke-width="1.4"/><path d="M3.3 5.7l3 3.3 6-7" stroke="#2b2b2b" stroke-width="1.4" fill="none"/></svg><span class="t">真偽値</span></div><div class="fc" style="left:146px;top:545px;height:41px"><svg class="g" width="8" height="13" viewBox="0 0 8 13"><circle cx="1.2" cy="1.2" r="0.95" fill="#cfcfcf"/><circle cx="1.2" cy="4.5" r="0.95" fill="#cfcfcf"/><circle cx="1.2" cy="7.8" r="0.95" fill="#cfcfcf"/><circle cx="1.2" cy="11.1" r="0.95" fill="#cfcfcf"/><circle cx="6.2" cy="1.2" r="0.95" fill="#cfcfcf"/><circle cx="6.2" cy="4.5" r="0.95" fill="#cfcfcf"/><circle cx="6.2" cy="7.8" r="0.95" fill="#cfcfcf"/><circle cx="6.2" cy="11.1" r="0.95" fill="#cfcfcf"/></svg><svg class="i" width="13" height="13" viewBox="0 0 13 13"><path d="M5 2.3h7.5M5 6.5h7.5M5 10.7h7.5" stroke="#2b2b2b" stroke-width="1.2"/><path d="M0.5 2.2l1 1 1.7-2M0.5 6.4l1 1 1.7-2M0.5 10.6l1 1 1.7-2" stroke="#2b2b2b" stroke-width="1" fill="none"/></svg><span class="t">複数選択</span></div>
</div>
<div id="ctr">
<div id="ctrbar">
<div id="fname">休暇</div>
<svg class="a" style="left:68px;top:22px" width="10" height="6" viewBox="0 0 10 6"><path d="M0.6 0.6L5 5l4.4-4.4" stroke="#3d7fd0" stroke-width="1.4" fill="none"/></svg>
<div id="secbtn">セクションの管理<svg class="a" style="left:125px;top:10px" width="8" height="5" viewBox="0 0 8 5"><path d="M0.5 0.5L4 4l3.5-3.5" stroke="#222" stroke-width="1.4" fill="none"/></svg></div>
<div id="dots"><div class="bl"></div><svg class="a" style="left:10px;top:9px" width="11" height="3" viewBox="0 0 11 3"><circle cx="1.3" cy="1.5" r="1.25" fill="#222"/><circle cx="5.5" cy="1.5" r="1.25" fill="#222"/><circle cx="9.7" cy="1.5" r="1.25" fill="#222"/></svg></div>
</div>
<div id="sech">休暇</div>
<div id="secl"></div>
<div class="lb r" style="left:37px;top:132.5px">従業員番号<svg class="a" style="left:77px;top:3px" width="14" height="14" viewBox="0 0 14 14"><path d="M7 7L2 12.2" stroke="#6a6a6a" stroke-width="3.6" stroke-linecap="round"/><path d="M7 7L2 12.2" stroke="#fff" stroke-width="1.5" stroke-linecap="round"/><circle cx="9.4" cy="4.6" r="3.8" fill="#fff" stroke="#6a6a6a" stroke-width="1.1"/><circle cx="10.5" cy="3.6" r="0.8" fill="#6a6a6a"/></svg></div>
<div class="inp" style="left:37px;top:157px"><span class="sel"><span class="ds">-----</span> 選択<span class="ds">-----</span></span><svg class="a" style="left:256px;top:12px" width="10" height="6" viewBox="0 0 10 6"><path d="M0.5 0.5L5 5l4.5-4.5" stroke="#b9b9b9" stroke-width="1.2" fill="none"/></svg></div>
<div class="lb r" style="left:37px;top:204.5px">休暇の種類</div>
<div class="inp" style="left:37px;top:229px"><span class="sel"><span class="ds">-----</span> 選択<span class="ds">-----</span></span><svg class="a" style="left:256px;top:12px" width="10" height="6" viewBox="0 0 10 6"><path d="M0.5 0.5L5 5l4.5-4.5" stroke="#b9b9b9" stroke-width="1.2" fill="none"/></svg></div>
<div class="lb r" style="left:37px;top:277.3px">開始</div>
<div class="inp" style="left:37px;top:302px"><span class="ph">mm/dd/yyyy</span><div class="ad"><svg class="a" style="left:13px;top:7px" width="13" height="14" viewBox="0 0 13 14"><rect x="0" y="2.5" width="13" height="11" fill="#5a5a5a"/><rect x="2.6" y="0" width="1.3" height="3" fill="#5a5a5a"/><rect x="5.8" y="0.6" width="1.3" height="2.4" fill="#5a5a5a"/><rect x="9" y="0" width="1.3" height="3" fill="#5a5a5a"/><rect x="1.6" y="4.6" width="1.6" height="1.6" fill="#fff"/><rect x="1.6" y="7.2" width="1.6" height="1.6" fill="#fff"/><rect x="1.6" y="9.8" width="1.6" height="1.6" fill="#fff"/><rect x="4.2" y="4.6" width="1.6" height="1.6" fill="#fff"/><rect x="4.2" y="7.2" width="1.6" height="1.6" fill="#fff"/><rect x="4.2" y="9.8" width="1.6" height="1.6" fill="#fff"/><rect x="6.8" y="4.6" width="1.6" height="1.6" fill="#fff"/><rect x="6.8" y="7.2" width="1.6" height="1.6" fill="#fff"/><rect x="6.8" y="9.8" width="1.6" height="1.6" fill="#fff"/><rect x="9.4" y="4.6" width="1.6" height="1.6" fill="#fff"/><rect x="9.4" y="7.2" width="1.6" height="1.6" fill="#fff"/><rect x="9.4" y="9.8" width="1.6" height="1.6" fill="#fff"/></svg></div></div>
<div class="lb r" style="left:37px;top:349.4px">終了</div>
<div class="inp" style="left:37px;top:374px"><span class="ph">mm/dd/yyyy</span><div class="ad"><svg class="a" style="left:13px;top:7px" width="13" height="14" viewBox="0 0 13 14"><rect x="0" y="2.5" width="13" height="11" fill="#5a5a5a"/><rect x="2.6" y="0" width="1.3" height="3" fill="#5a5a5a"/><rect x="5.8" y="0.6" width="1.3" height="2.4" fill="#5a5a5a"/><rect x="9" y="0" width="1.3" height="3" fill="#5a5a5a"/><rect x="1.6" y="4.6" width="1.6" height="1.6" fill="#fff"/><rect x="1.6" y="7.2" width="1.6" height="1.6" fill="#fff"/><rect x="1.6" y="9.8" width="1.6" height="1.6" fill="#fff"/><rect x="4.2" y="4.6" width="1.6" height="1.6" fill="#fff"/><rect x="4.2" y="7.2" width="1.6" height="1.6" fill="#fff"/><rect x="4.2" y="9.8" width="1.6" height="1.6" fill="#fff"/><rect x="6.8" y="4.6" width="1.6" height="1.6" fill="#fff"/><rect x="6.8" y="7.2" width="1.6" height="1.6" fill="#fff"/><rect x="6.8" y="9.8" width="1.6" height="1.6" fill="#fff"/><rect x="9.4" y="4.6" width="1.6" height="1.6" fill="#fff"/><rect x="9.4" y="7.2" width="1.6" height="1.6" fill="#fff"/><rect x="9.4" y="9.8" width="1.6" height="1.6" fill="#fff"/></svg></div></div>
<div class="lb" style="left:37px;top:422.5px">申請日</div>
<div class="inp" style="left:37px;top:447px"><span class="ph">mm/dd/yyyy</span><div class="ad"><svg class="a" style="left:13px;top:7px" width="13" height="14" viewBox="0 0 13 14"><rect x="0" y="2.5" width="13" height="11" fill="#5a5a5a"/><rect x="2.6" y="0" width="1.3" height="3" fill="#5a5a5a"/><rect x="5.8" y="0.6" width="1.3" height="2.4" fill="#5a5a5a"/><rect x="9" y="0" width="1.3" height="3" fill="#5a5a5a"/><rect x="1.6" y="4.6" width="1.6" height="1.6" fill="#fff"/><rect x="1.6" y="7.2" width="1.6" height="1.6" fill="#fff"/><rect x="1.6" y="9.8" width="1.6" height="1.6" fill="#fff"/><rect x="4.2" y="4.6" width="1.6" height="1.6" fill="#fff"/><rect x="4.2" y="7.2" width="1.6" height="1.6" fill="#fff"/><rect x="4.2" y="9.8" width="1.6" height="1.6" fill="#fff"/><rect x="6.8" y="4.6" width="1.6" height="1.6" fill="#fff"/><rect x="6.8" y="7.2" width="1.6" height="1.6" fill="#fff"/><rect x="6.8" y="9.8" width="1.6" height="1.6" fill="#fff"/><rect x="9.4" y="4.6" width="1.6" height="1.6" fill="#fff"/><rect x="9.4" y="7.2" width="1.6" height="1.6" fill="#fff"/><rect x="9.4" y="9.8" width="1.6" height="1.6" fill="#fff"/></svg></div></div>
<div class="lb" style="left:37px;top:494.5px">取得時間数</div>
<div class="inp" style="left:37px;top:519px"></div>
<div class="lb" style="left:37px;top:568px">理由</div>
<div class="inp" style="left:37px;top:592px;height:42px"></div>
<div class="lb" style="left:37px;top:651.4px">チームのメールアドレス</div>
<div class="inp" style="left:37px;top:676px"><div class="ad"><svg class="a" style="left:13px;top:9px" width="13" height="11" viewBox="0 0 13 11"><rect x="0.7" y="0.7" width="11.6" height="9.3" stroke="#555" stroke-width="1.3" fill="none"/><path d="M1 1.2l5.5 5 5.5-5" stroke="#555" stroke-width="1.3" fill="none"/></svg></div></div>
<div class="lb" style="left:355px;top:132.5px">メモ</div>
<div class="box" style="left:355px;top:157px;height:58px">休暇の規定については<span class="lnk">こちら</span>を参照してください</div>
<div class="lb" style="left:355px;top:232.8px">会社の休日と被っていませ...</div>
<div class="box" style="left:355px;top:257px;height:48px;padding-top:8.5px"><span class="lnk">会社の休日</span> と被っていませんか？</div>
<div class="lb" style="left:355px;top:323.5px">医師の診断書</div>
<div class="inp" style="left:355px;top:348px"><div class="ad"><svg class="a" style="left:13px;top:7px" width="13" height="14" viewBox="0 0 13 14"><path d="M3.3 5.8H0.7v7.3h11.6V5.8H9.7" stroke="#555" stroke-width="1.2" fill="none"/><path d="M6.5 9.8V1.3M3.7 4L6.5 1.2 9.3 4" stroke="#555" stroke-width="1.2" fill="none"/></svg></div></div>
</div>
<div id="rshadow"></div>
<div id="rgt">
<div id="tabs"><div class="tab" style="left:46px;color:#3d7fd0">フォームの詳細</div><div class="tab" style="left:176px">項目の詳細</div><div class="a" style="left:42px;top:46px;width:105px;height:2px;background:#3c82dc"></div></div>
<div class="rl" style="top:62.7px">フォーム名</div>
<div class="ri" style="top:87.4px;height:30px;line-height:30px;font-size:14px">休暇</div>
<div class="rl" style="top:127px">ラベル名</div>
<div class="ri" style="top:150.4px;height:30px;line-height:31px;padding-left:3px;background:#f3f4f6;font-size:12.6px;letter-spacing:-0.1px;-webkit-text-stroke:0.2px #111">P_Leave</div>
<div class="rl" style="top:188.6px">詳細</div>
<div class="ri" style="top:213px;height:65px;line-height:14px;padding:8px 0 0 8.5px;font-size:13.2px;letter-spacing:0.09px;white-space:normal;-webkit-text-stroke:0.2px #111">Lists the details of leave availed by<br>an employee<svg class="a" style="right:1px;bottom:1px" width="10" height="10" viewBox="0 0 10 10"><path d="M10 0L0 10M10 4L4 10M10 8L8 10" stroke="#999" stroke-width="0.9"/></svg></div>
<div class="sh" style="top:296.4px">フォームのレイアウト</div>
<div class="rd on" style="top:343.1px"></div><div class="opt" style="left:41px;top:341.3px">単一のページのレイアウト</div>
<div class="rd" style="top:374.3px"></div><div class="opt" style="left:41px;top:371.8px">複数のページのレイアウト</div>
<div class="sh" style="top:412.5px">他サービスとの連携</div>
<div class="cb" style="top:460.5px"></div><div class="opt" style="top:457.5px;font-weight:500"><span class="lt">DocuSign</span>を有効にする</div>
<div class="cb" style="top:490.5px"></div><div class="opt" style="top:487.5px;font-weight:500"><span class="lt">Zoho</span> サインを有効にする</div>
<div class="sh" style="top:526.7px">検証</div>
<div class="cb" style="top:574px"></div><div class="opt" style="top:571px;font-weight:500">独自の検証</div>
<div class="sh" style="top:609.6px">General Configuration</div>
<div class="cb" style="top:657.7px"></div><div class="opt" style="top:654.7px;font-weight:500"><span class="lt">Enable password protection</span><svg style="display:inline-block;vertical-align:-2.5px;margin-left:4px" width="13" height="13" viewBox="0 0 12 12"><circle cx="6" cy="6" r="5.3" stroke="#555" stroke-width="1" fill="none"/><path d="M6 5.2v3.6" stroke="#555" stroke-width="1.2"/><circle cx="6" cy="3.5" r="0.7" fill="#555"/></svg></div>
<div class="sh" style="top:693px">自動番号設定</div>
<div class="a" style="left:210px;top:703px;width:70px;height:15px;overflow:hidden"><div class="a" style="left:16.5px;top:2.5px;font-size:13.5px;line-height:20px;color:#8c8c8c;white-space:nowrap">Reset</div><svg class="a" style="left:3px;top:5.5px" width="13" height="13" viewBox="0 0 13 13"><path d="M2.6 10.4A5.5 5.5 0 1 1 12 6.2" stroke="#8c8c8c" stroke-width="1.3" fill="none"/><path d="M10.2 5.4h3.6L12 8.3z" fill="#8c8c8c"/></svg></div>
<div class="inshadow"></div>
</div>
<div id="dd">
<svg class="a" style="left:141px;top:-7px" width="14" height="7" viewBox="0 0 14 7"><path d="M0 7L7 0.5 14 7z" fill="#fff" stroke="#e0e0e0" stroke-width="1"/><path d="M0.5 7.5h13" stroke="#fff" stroke-width="1.5"/></svg>
<div class="it" style="top:5.6px">フォームのプレビュー</div>
<div class="it hl" style="top:28px">アクセス制限</div>
<div class="it" style="top:57.8px"><span style="word-spacing:-1.5px">設定 ルール</span></div>
<div class="it" style="top:83.7px">関連フォームの設定</div>
</div>
<div id="botfade"></div>
</body>
</html>
